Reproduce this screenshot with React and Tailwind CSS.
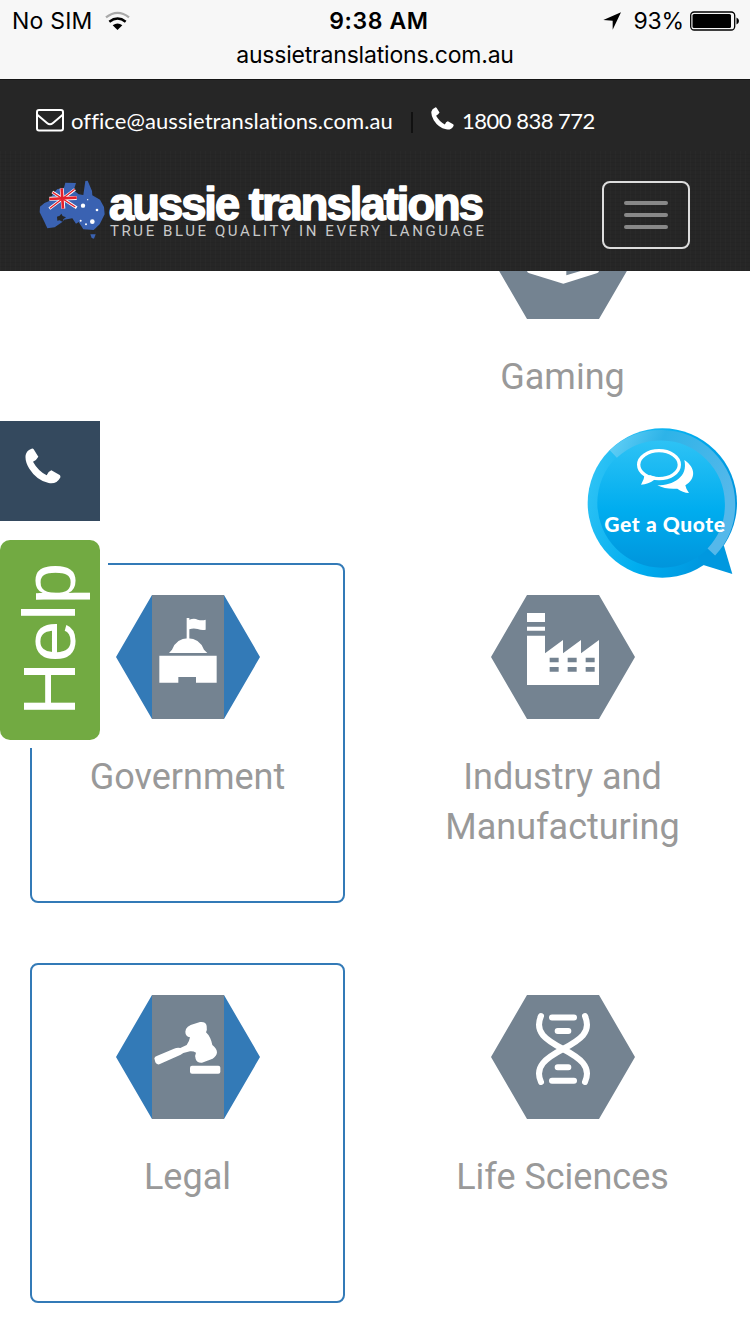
import React from "react";

function StatusBar() {
  return (
    <div className="h-[79px] bg-[#f7f7f7] font-['Inter','Liberation_Sans',sans-serif] text-black">
      <div className="grid h-[42px] grid-cols-3 items-center pl-[12px] pr-[10px]">
        <div className="flex items-center gap-[12px]">
          <span className="whitespace-nowrap text-[23px] tracking-[0.2px]">No SIM</span>
          <svg width="26" height="20" viewBox="312 30 78 60" fill="none">
            <path d="M315 49 Q350 22 384 49" stroke="#a9a9a9" strokeWidth="7" />
            <path d="M325 62 Q350 43 374 62" stroke="#000" strokeWidth="7.5" />
            <path d="M335 73 Q350 62 364 73 L349.500 87Z" fill="#000" />
          </svg>
        </div>
        <span className="whitespace-nowrap pl-[6px] text-center text-[23px] font-semibold tracking-[0.6px]">9:38 AM</span>
        <div className="flex items-center justify-end">
          <svg className="mr-[13px]" width="18" height="18" viewBox="687 35 54 54">
            <path d="M741 36 L716 88 V61 L688 59Z" />
          </svg>
          <span className="mr-[6px] whitespace-nowrap text-[23px] tracking-[-0.2px]">93%</span>
          <svg width="50" height="20" viewBox="0 0 50 20">
            <rect x="0.700" y="1" width="44" height="18" rx="3.500" fill="none" stroke="#000" strokeWidth="1.300" />
            <rect x="2.500" y="3" width="38.500" height="14" rx="1.500" />
            <path d="M46.500 6.500 Q49 7.500 49 10 Q49 12.500 46.500 13.500Z" />
          </svg>
        </div>
      </div>
      <div className="h-[26px] whitespace-nowrap text-center text-[23px] leading-[26px] tracking-[-0.2px]">aussietranslations.com.au</div>
    </div>
  );
}

function PhoneIcon({ className }) {
  return (
    <svg className={className} viewBox="77 113 108 108" fill="#fff">
      <path d="M95 116 Q100 113 103 117 L117 139 Q112 149 101 154 Q115 180 142 195 Q147 183 156 180 L181 194 Q185 198 182 203 Q172 222 148 218 Q112 210 90 175 Q76 152 79 134 Q82 121 95 116Z" />
    </svg>
  );
}

function Logo() {
  return (
    <svg className="overflow-visible" width="450" height="64" viewBox="0 0 450 64">
      <g transform="translate(-18 -13) scale(0.33333)">
        <path fill="#3a62b2" d="M60 125 Q72 112 88 108 L98 88 L112 72 L122 71 L132 68 L136 53 L168 54 L161 76 L176 88 L190 90 L196 48 L203 47 L216 78 L217 91 L240 104 L252 126 L254 148 L239 178 L221 195 L190 193 L176 171 L168 176 L157 160 L132 164 L128 170 L104 187 L82 190 L72 168 L59 142Z" />
        <path fill="#3a62b2" d="M211 208 L227 208 L222 221 L215 219Z" />
        <path stroke="#fff" strokeWidth="12" fill="none" d="M88 101 L170 99 M125 70 L130 131" />
        <path stroke="#fff" strokeWidth="9" fill="none" d="M88 131 L165 73 M97 81 L170 128" />
        <path stroke="#e5202b" strokeWidth="8" fill="none" d="M88 102 L170 98 M125 70 L129 131" />
        <path stroke="#e5202b" strokeWidth="4" fill="none" d="M90 130 L164 73 M98 82 L166 126" />
        <path fill="#262626" d="M111 155 L119 152 L124 146 L128 153 L138 157 L130 163 L128 171 L119 166 L112 167Z" />
        <g fill="#fff">
          <circle cx="189" cy="122" r="6.500" /><circle cx="231" cy="135" r="4" /><circle cx="217" cy="170" r="7" /><circle cx="198" cy="178" r="3" /><circle cx="182" cy="167" r="3" /><circle cx="203" cy="104" r="2" />
        </g>
      </g>
      <text x="71" y="41.5" textLength="373" lengthAdjust="spacingAndGlyphs" fill="#fff" stroke="#fff" strokeWidth="1.600" strokeLinejoin="round" className="font-['Liberation_Sans',sans-serif] text-[47px] font-bold tracking-[-2px]">aussie translations</text>
      <text x="72" y="57.5" textLength="374" fill="#c9c9c9" className="font-['Roboto',sans-serif] text-[15px]">TRUE BLUE QUALITY IN EVERY LANGUAGE</text>
    </svg>
  );
}

function Header() {
  return (
    <header className="h-[192px] border-t border-[#151515] bg-[#262626]">
      <div className="flex h-[71px] items-center pl-[36px] pt-[10px] font-['Lato','Liberation_Sans',sans-serif] text-[22px] text-white">
        <svg className="mr-[7px]" width="28" height="23" viewBox="0 0 28 23" fill="none" stroke="#fff" strokeWidth="2">
          <rect x="1" y="1" width="26" height="20.500" rx="2" />
          <path d="M1 5.500 L11 14 Q14 16.500 17 14 L27 5.500" />
        </svg>
        <span className="w-[322px] whitespace-nowrap tracking-[0.1px]">office@aussietranslations.com.au</span>
        <span className="ml-[18px] mr-[18px] mt-[4px] h-[21px] w-[2px] bg-[#111]" />
        <PhoneIcon className="mr-[8px] mb-[5px] h-[23px] w-[23px]" />
        <span className="whitespace-nowrap tracking-[-0.5px]">1800 838 772</span>
      </div>
      <div className="flex h-[120px] items-start justify-between bg-[repeating-linear-gradient(90deg,#ffffff04_0_1px,transparent_1px_5px),repeating-linear-gradient(0deg,#0000000f_0_1px,transparent_1px_4px)] pl-[38px] pr-[60px] pt-[27px]">
        <Logo />
        <button className="mt-[3px] flex h-[68px] w-[88px] flex-col items-center justify-center gap-[8px] rounded-[8px] border-2 border-[#ddd]">
          <span className="h-[4px] w-[44px] rounded-[2px] bg-[#888]" />
          <span className="h-[4px] w-[44px] rounded-[2px] bg-[#888]" />
          <span className="h-[4px] w-[44px] rounded-[2px] bg-[#888]" />
        </button>
      </div>
    </header>
  );
}

function GamingIcon() {
  return (
    <g transform="translate(-33 -75)">
      <path fill="#fff" d="M141 200 L250 170 L357 200 V303 Q356 308 350 310 L250 341 L148 310 Q142 308 141 303Z" />
      <path fill="#748391" d="M259 240 H302 V303 L259 316Z" />
    </g>
  );
}

function GovernmentIcon() {
  return (
    <g fill="#fff">
      <path d="M212 69 H220 V74 Q235 68 245 74 Q258 78 269 74 V104 Q258 107 245 102 Q232 98 220 103 V132 H212Z" />
      <path d="M159 174 L168 164 Q182 130 216 130 Q250 130 264 164 L274 174Z" />
      <path d="M130 182 H302 V263 H240 V246 H187 V263 H130Z" />
    </g>
  );
}

function FactoryIcon() {
  return (
    <g fill="#fff">
      <path d="M108 54 H162 V81 H108Z M108 95 H162 V107 H108Z" />
      <path d="M162 175 L216 135 V175 L270 135 V175 L324 135 V270 H108 V122 H162Z" />
      <path fill="#748391" d="M176 188h27v14h-27z M230 188h27v14h-27z M284 188h27v14h-27z M176 216h27v14h-27z M230 216h27v14h-27z M284 216h27v14h-27z" />
    </g>
  );
}

function GavelIcon() {
  return (
    <g fill="#fff" transform="translate(-48 -120)">
      <path d="M258 222 Q262 214 272 210 L300 201 Q318 199 320 213 Q322 226 318 232 Q332 245 337 270 Q350 280 351 292 Q350 304 338 311 L306 323 Q290 324 287 312 Q284 300 288 293 Q280 288 270 289 L250 294 Q243 300 232 304 L178 328 Q170 330 166 322 L163 310 Q164 304 172 302 L222 281 Q232 277 241 279 L260 270 Q268 260 270 247 Q256 244 256 230Z" />
      <rect x="270" y="332" width="91" height="24" rx="6" />
    </g>
  );
}

function DnaIcon() {
  return (
    <g fill="none" stroke="#fff" strokeWidth="18" strokeLinecap="round" transform="translate(-153 -30)">
      <path d="M303 93 C282 142 318 165 369 192 C420 219 456 245 435 291" />
      <path d="M435 93 C456 142 420 165 369 192 C318 219 282 245 303 291" />
      <path d="M336 97.500 H402 M353 138 H385 M353 247 H385 M336 287.500 H402" />
    </g>
  );
}

function Card({ label, active, children }) {
  return (
    <div className={active ? "flex h-[340px] flex-col items-center rounded-[8px] border-2 border-[#337ab7] pt-[30px]" : "flex h-[340px] flex-col items-center border-2 border-transparent pt-[30px]"}>
      <svg className="relative left-[0.5px]" width="144" height="124" viewBox="0 0 432 372">
        <path d="M108 0 L0 186 L108 372Z M324 0 L432 186 L324 372Z" fill={active ? "#337ab7" : "#748391"} />
        <rect x="108" width="216" height="372" fill="#748391" />
        {children}
      </svg>
      <div className="mt-[33px] w-[270px] text-center font-['Roboto',sans-serif] text-[36px] leading-[50px] text-[#999]">{label}</div>
    </div>
  );
}

function QuoteBubble() {
  return (
    <div className="absolute left-[570px] top-[415px] h-[180px] w-[180px]">
      <svg width="180" height="180" viewBox="0 0 540 540">
        <defs>
          <linearGradient id="ring" x1="0" y1="0.300" x2="1" y2="0.700">
            <stop offset="0" stopColor="#2fc3f5" /><stop offset="0.500" stopColor="#00adef" /><stop offset="1" stopColor="#0090da" />
          </linearGradient>
          <linearGradient id="disc" x1="0" y1="0" x2="0" y2="1">
            <stop offset="0" stopColor="#2fc3f5" /><stop offset="0.550" stopColor="#00adef" /><stop offset="1" stopColor="#0095dc" />
          </linearGradient>
          <linearGradient id="arc" x1="0" y1="0" x2="1" y2="0.500">
            <stop offset="0" stopColor="#62cff6" /><stop offset="0.350" stopColor="#2db3e8" /><stop offset="1" stopColor="#55b8ea" />
          </linearGradient>
        </defs>
        <circle cx="277" cy="264" r="224" fill="url(#ring)" />
        <path fill="#0098df" d="M462 393 L487 477 L400 450 L380 420 L430 370Z" />
        <circle cx="276" cy="264" r="194" fill="url(#disc)" />
        <path d="M130 117 A208 208 0 0 1 424 411" fill="none" stroke="url(#arc)" strokeWidth="31" />
        <path fill="#fff" d="M343 135 C378 158 378 192 346 211 Q348 223 357 234 Q338 233 322 221 Q288 224 262 211 C310 211 355 186 343 135Z" />
        <ellipse cx="267" cy="149" rx="61" ry="42" fill="none" stroke="#fff" strokeWidth="10" />
        <path fill="#fff" d="M224 177 Q223 194 213 209 Q236 208 251 196 L258 186 L239 180 L236 186Z" />
      </svg>
      <div className="absolute left-[5px] top-[97px] w-[180px] whitespace-nowrap text-center font-['Lato',sans-serif] text-[21px] font-black leading-[24px] tracking-[0.6px] text-white">Get a Quote</div>
    </div>
  );
}

export default function App() {
  return (
    <div className="relative h-[1334px] w-[750px] overflow-hidden bg-white">
      <StatusBar />
      <Header />
      <main className="h-[1063px] overflow-hidden">
        <div className="-mt-[108px] grid grid-cols-2 gap-[60px] px-[30px]">
          <div />
          <Card label="Gaming"><GamingIcon /></Card>
          <Card label="Government" active><GovernmentIcon /></Card>
          <Card label="Industry and Manufacturing"><FactoryIcon /></Card>
          <Card label="Legal" active><GavelIcon /></Card>
          <Card label="Life Sciences"><DnaIcon /></Card>
        </div>
      </main>
      <button className="absolute left-0 top-[421px] h-[100px] w-[100px] bg-[#34495e]">
        <PhoneIcon className="ml-[25px] -mt-[10px] h-[36px] w-[36px]" />
      </button>
      <button className="absolute left-0 top-[540px] flex h-[200px] w-[100px] items-center justify-center rounded-[10px] bg-[#72aa42] shadow-[0_0_0_8px_#fff]">
        <span className="relative left-[-1px] rotate-180 whitespace-nowrap font-['Liberation_Sans',sans-serif] text-[75px] leading-[100px] tracking-[-0.3px] text-white [writing-mode:vertical-rl]">Help</span>
      </button>
      <QuoteBubble />
    </div>
  );
}
